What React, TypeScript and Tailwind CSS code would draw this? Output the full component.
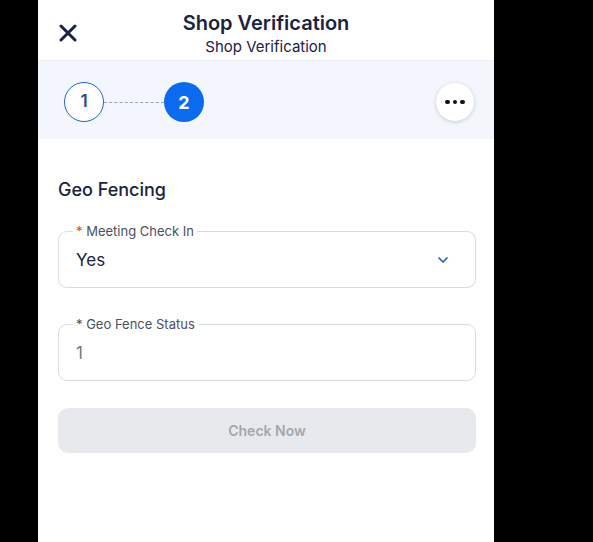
import { ChevronDown } from 'lucide-react';

function Field({ label, value, required, select, muted }: { label: string; value: string; required?: boolean; select?: boolean; muted?: boolean }) {
  return (
    <div className="relative h-[57px] rounded-[9px] border border-[#d9dce4] flex items-center pl-[17px] pr-[24px]">
      <span className="absolute -top-[9px] left-[14px] bg-white px-[3px] text-[13px] leading-[16px] text-[#4b5163]">
        <span className={required ? 'text-[#e0452b]' : 'text-[#4b5163]'}>*</span> {label}
      </span>
      <span className={`flex-1 text-[17px] leading-[22px] ${muted ? 'text-[#737886]' : 'text-[#1b2340]'}`}>{value}</span>
      {select && <ChevronDown size={16} strokeWidth={2.5} className="text-[#1f5fc4]" />}
    </div>
  );
}

export default function App() {
  return (
    <div className="w-full h-[542px] bg-black flex" style={{ fontFamily: 'Inter, "Open Sans", sans-serif' }}>
      <div className="ml-[38px] w-[456px] h-full bg-white flex flex-col">
        <div className="relative h-[61px] border-b border-[#eceef2] flex flex-col items-center pt-[11px]">
          <svg className="absolute left-[21px] top-[24px]" width="18" height="18" viewBox="0 0 18 18">
            <path d="M2 2 L16 16 M16 2 L2 16" stroke="#1b2340" strokeWidth="3" strokeLinecap="round" />
          </svg>
          <div className="text-[20px] leading-[25px] font-semibold text-[#1b2340]">Shop Verification</div>
          <div className="text-[15px] leading-[22px] text-[#1b2340]">Shop Verification</div>
        </div>

        <div className="h-[78px] bg-[#f3f6fc] flex items-center px-[26px] pt-[4px]">
          <div className="w-10 h-10 rounded-full border-[1.5px] border-[#1a66d6] bg-white flex items-center justify-center text-[17px] font-semibold text-[#1e4e8c]">1</div>
          <div className="w-[60px] border-t border-dashed border-[#9aa3b0]"></div>
          <div className="w-10 h-10 rounded-full bg-[#0b6bf0] flex items-center justify-center text-[18px] font-bold text-white">2</div>
          <div className="flex-1"></div>
          <div className="w-[38px] h-[38px] mr-[-6px] rounded-full bg-white shadow-[0_1px_4px_rgba(0,0,0,0.18)] flex items-center justify-center gap-[3px]">
            <span className="w-[4.5px] h-[4.5px] rounded-full bg-[#111]"></span>
            <span className="w-[4.5px] h-[4.5px] rounded-full bg-[#111]"></span>
            <span className="w-[4.5px] h-[4.5px] rounded-full bg-[#111]"></span>
          </div>
        </div>

        <div className="pl-[20px] pr-[18px] pt-[39px] flex flex-col">
          <h2 className="text-[18px] leading-[24px] font-medium text-[#1b2340]">Geo Fencing</h2>
          <div className="mt-[29px]">
            <Field label="Meeting Check In" value="Yes" required select />
          </div>
          <div className="mt-[36px]">
            <Field label="Geo Fence Status" value="1" muted />
          </div>
          <button className="mt-[27px] h-[45px] rounded-[10px] bg-[#e8e9ed] text-[14px] font-semibold text-[#a2a6af]">Check Now</button>
        </div>
      </div>
    </div>
  );
}
